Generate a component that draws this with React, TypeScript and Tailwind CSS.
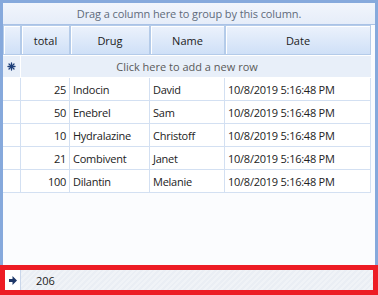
import React from "react";

const rows = [
  { total: 25, drug: "Indocin", name: "David", date: "10/8/2019 5:16:48 PM" },
  { total: 50, drug: "Enebrel", name: "Sam", date: "10/8/2019 5:16:48 PM" },
  { total: 10, drug: "Hydralazine", name: "Christoff", date: "10/8/2019 5:16:48 PM" },
  { total: 21, drug: "Combivent", name: "Janet", date: "10/8/2019 5:16:48 PM" },
  { total: 100, drug: "Dilantin", name: "Melanie", date: "10/8/2019 5:16:48 PM" },
];

const cols = "grid grid-cols-[18px_49px_80px_75px_146px]";

function HeaderCell({ children }: { children?: React.ReactNode }) {
  return (
    <div className="h-full border border-[#b4cbe9] bg-gradient-to-b from-[#ecf2fc] to-[#cfe0f7] shadow-[inset_1px_1px_0_#ffffff] flex items-center justify-center text-[#1b1b1b]">
      {children}
    </div>
  );
}

export default function App() {
  return (
    <div
      className="w-[378px] h-[295px] flex flex-col bg-white text-[11px] leading-none"
      style={{ fontFamily: '"Open Sans", "Noto Sans", sans-serif' }}
    >
      <div className="flex-1 flex flex-col border-t-[3px] border-x-[3px] border-[#86a9dc] bg-white">
        {/* group panel */}
        <div className="h-[22px] flex items-center justify-center bg-gradient-to-b from-[#f1f5fc] to-[#e6edf9] border-b border-[#a9c2e6] text-[#5f6b7a] tracking-[-0.1px]">
          Drag a column here to group by this column.
        </div>
        <div className="flex-1 pr-[4px] bg-[#fbfcfe]">
          <div className="bg-white">
            {/* header */}
            <div className={`${cols} h-[30px]`}>
              <HeaderCell />
              <HeaderCell>total</HeaderCell>
              <HeaderCell>Drug</HeaderCell>
              <HeaderCell>Name</HeaderCell>
              <HeaderCell>Date</HeaderCell>
            </div>
            {/* new row */}
            <div className="flex h-[23px] bg-[#e8eff9] border-t border-white border-b border-[#d3e0f2]">
              <div className="w-[18px] flex items-center justify-center border-r border-white">
                <svg width="9" height="9" viewBox="0 0 9 9">
                  <g stroke="#1d3f7a" strokeWidth="1.3" strokeLinecap="round">
                    <line x1="4.5" y1="1" x2="4.5" y2="8" />
                    <line x1="1" y1="4.5" x2="8" y2="4.5" />
                    <line x1="2" y1="2" x2="7" y2="7" />
                    <line x1="7" y1="2" x2="2" y2="7" />
                  </g>
                </svg>
              </div>
              <div className="flex-1 flex items-center justify-center pr-[18px] text-[#5a5a5a]">
                Click here to add a new row
              </div>
            </div>
            {/* data rows */}
            {rows.map((r, i) => (
              <div key={i} className={`${cols} h-[23px] text-[#222222] tracking-[-0.25px]`}>
                <div className="border-r border-b border-[#d3e0f2] bg-white" />
                <div className="border-r border-b border-[#d3e0f2] flex items-center justify-end pr-[3px]">
                  {r.total}
                </div>
                <div className="border-r border-b border-[#d3e0f2] flex items-center pl-[3px]">
                  {r.drug}
                </div>
                <div className="border-r border-b border-[#d3e0f2] flex items-center pl-[3px]">
                  {r.name}
                </div>
                <div className="border-r border-b border-[#d3e0f2] flex items-center pl-[3px]">
                  {r.date}
                </div>
              </div>
            ))}
          </div>
        </div>
      </div>
      {/* footer / summary */}
      <div className="h-[30px] border-[5px] border-[#ed1c24] flex bg-[repeating-linear-gradient(135deg,#eaeef4_0px,#eaeef4_2px,#f0f3f7_2px,#f0f3f7_4px)]">
        <div className="w-[16px] flex items-center justify-center border-r border-[#c9d6ea] bg-white">
          <svg width="8" height="9" viewBox="0 0 8 9">
            <path d="M0 3 H3.5 V0 L8 4.5 L3.5 9 V6 H0 Z" fill="#1e3768" />
          </svg>
        </div>
        <div className="flex-1 flex items-center pl-[15px] text-[#1b1b1b]">206</div>
      </div>
    </div>
  );
}
